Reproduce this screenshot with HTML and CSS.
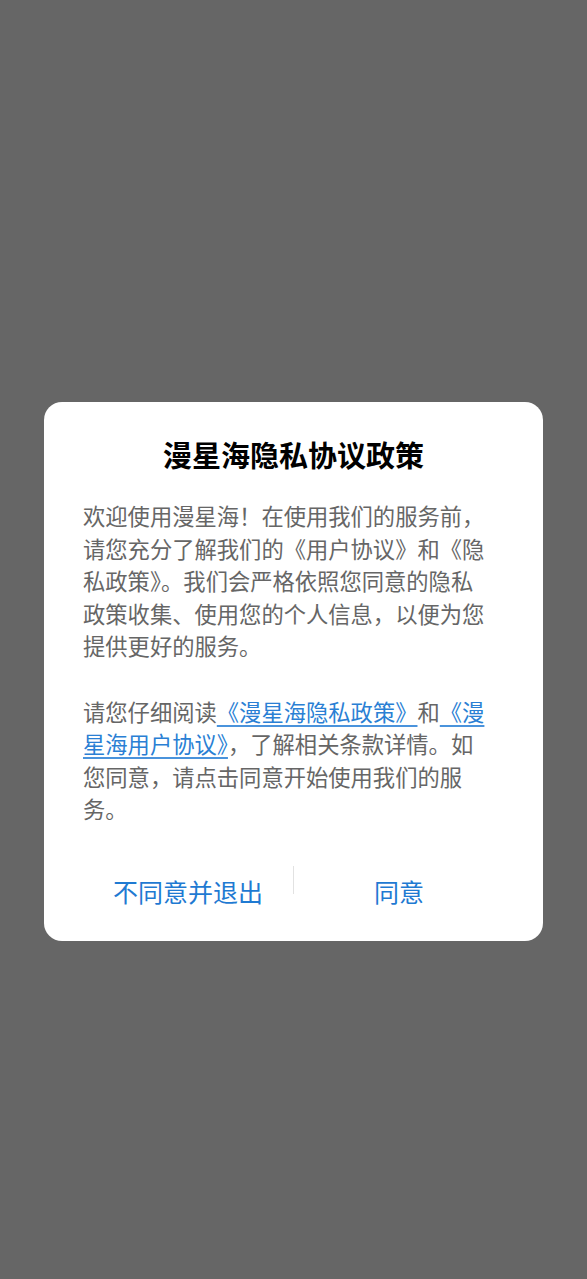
FILE: index.html
```html
<!DOCTYPE html>
<html lang="zh-CN">
<head>
<meta charset="utf-8">
<title>隐私协议政策</title>
<link rel="stylesheet" href="styles.css">
</head>
<body>
<div class="overlay">
  <div class="dialog">
    <h1 class="title">漫星海隐私协议政策</h1>
    <div class="content">
      <p class="para">欢迎使用漫星海！在使用我们的服务前，请您充分了解我们的《用户协议》和《隐私政策》。我们会严格依照您同意的隐私政策收集、使用您的个人信息，以便为您提供更好的服务。</p>
      <p class="para">请您仔细阅读<a class="link" href="#">《漫星海隐私政策》</a>和<a class="link" href="#">《漫星海用户协议》</a>，了解相关条款详情。如您同意，请点击同意开始使用我们的服务。</p>
    </div>
    <div class="actions">
      <button class="btn">不同意并退出</button>
      <span class="divider"></span>
      <button class="btn">同意</button>
    </div>
  </div>
</div>
</body>
</html>
```

FILE: styles.css
```css
html, body {
  margin: 0;
  padding: 0;
  height: 100%;
}
body {
  background: #666666;
  font-family: "Noto Sans CJK SC", "Noto Sans", sans-serif;
}
.overlay {
  display: flex;
  justify-content: center;
  padding-top: 402px;
}
.dialog {
  width: 499px;
  background: #ffffff;
  border-radius: 18px;
  padding: 34px 0 10px;
  box-sizing: border-box;
}
.title {
  margin: 0;
  text-align: center;
  font-size: 29px;
  line-height: 36px;
  font-weight: 700;
  color: #000000;
}
.content {
  margin-top: 27px;
  padding: 0 39px;
}
.para {
  margin: 0;
  max-width: 410px;
  font-size: 22.3px;
  line-height: 32.6px;
  color: #666666;
}
.para + .para {
  margin-top: 32.6px;
}
.link {
  color: #2a7fd4;
  text-decoration: underline;
  text-underline-offset: 4px;
  text-decoration-color: #4a93dc;
}
.actions {
  display: flex;
  margin-top: 26px;
  padding: 0 39px;
  height: 80px;
}
.btn {
  flex: 1;
  border: none;
  background: none;
  padding: 0;
  font-family: inherit;
  font-size: 25px;
  color: #1f7ad2;
}
.divider {
  width: 1px;
  height: 28px;
  margin-top: 15px;
  background: #e2e2e2;
}
```
